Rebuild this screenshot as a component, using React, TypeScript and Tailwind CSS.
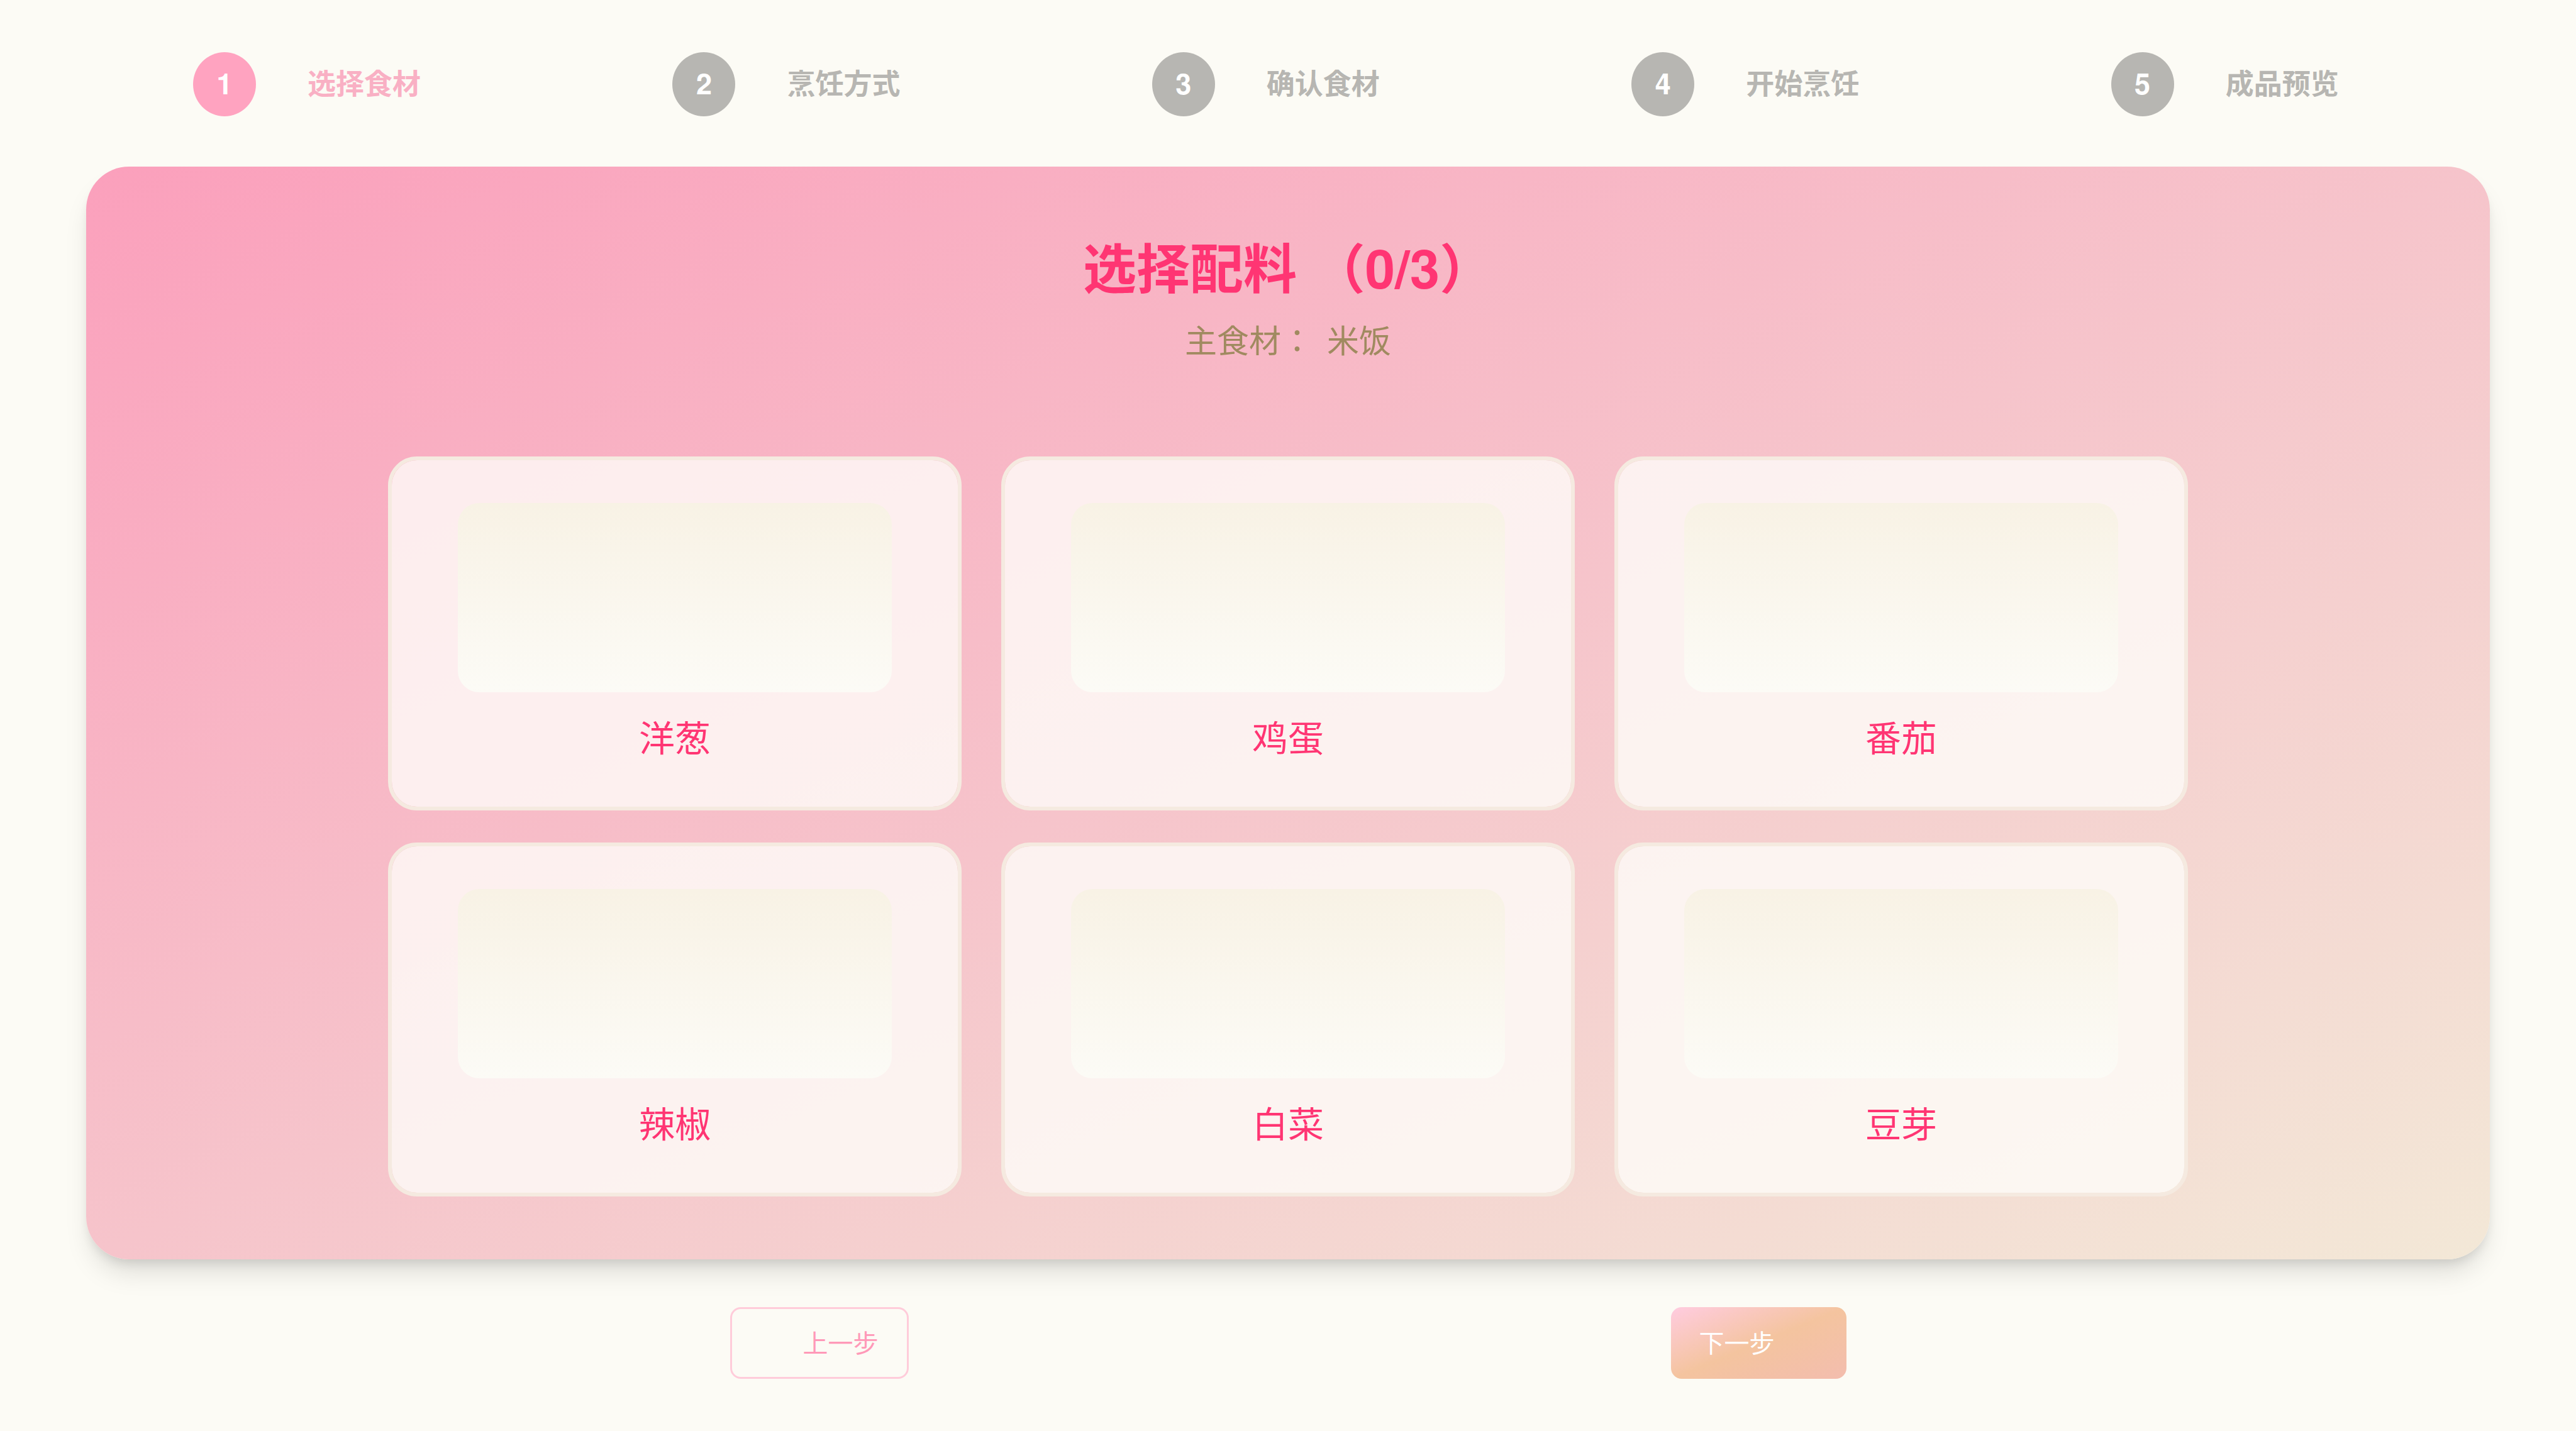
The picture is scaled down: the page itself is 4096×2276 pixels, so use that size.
const steps = ['选择食材', '烹饪方式', '确认食材', '开始烹饪', '成品预览'];
const ingredients = ['洋葱', '鸡蛋', '番茄', '辣椒', '白菜', '豆芽'];

function StepBar({ current }: { current: number }) {
  return (
    <nav aria-label="步骤" className="px-[142px]">
      <ol className="flex">
        {steps.map((label, i) => {
          const active = i === current;
          return (
            <li
              key={label}
              aria-current={active ? 'step' : undefined}
              className="flex flex-1 items-center gap-[82px] pl-[165px] text-[45px] leading-[64px] font-bold"
            >
              <span
                className={`flex h-[102px] w-[100px] shrink-0 items-center justify-center rounded-[50%] pb-1 text-white ${
                  active ? 'bg-[#ffa3c0]' : 'bg-[#b7b6b2]'
                }`}
              >
                {i + 1}
              </span>
              <span className={`pb-1 whitespace-nowrap ${active ? 'text-[#f9b0c4]' : 'text-[#b7b6b2]'}`}>{label}</span>
            </li>
          );
        })}
      </ol>
    </nav>
  );
}

function IngredientCard({ name }: { name: string }) {
  return (
    <button
      type="button"
      className="flex flex-col items-center gap-[30px] rounded-[46px] border-6 border-[#f5eae0] bg-[#fefcf9]/80 bg-clip-padding px-[105px] pt-[68px] pb-[72px]"
    >
      <span className="block h-[301px] w-full rounded-[34px] bg-linear-to-b/srgb from-[#f8f2e5] to-[#fcfbf6]" />
      <span className="text-[57px] leading-[80px] text-[#ff3573]">{name}</span>
    </button>
  );
}

export default function App() {
  return (
    <div className="min-h-screen bg-[#fcfbf5] pt-[83px] font-['Nimbus_Sans','TeX_Gyre_Heros','FreeSans','Liberation_Sans','Noto_Sans_CJK_JP',sans-serif]">
      <StepBar current={0} />

      <main className="mx-[137px] mt-20 flex flex-col items-center rounded-[68px] bg-linear-to-br/srgb from-[#fba0bc] via-[#f6c4cb] to-[#f3e8d7] px-16 pt-[107px] pb-[100px] shadow-[0_28px_43px_-9px_rgba(0,0,0,0.13),0_11px_17px_-6px_rgba(0,0,0,0.11)]">
        <h1 className="text-[85px] leading-[104px] font-bold text-[#ff3573]">选择配料 （0/3）</h1>
        <p className="mt-[25px] text-[51px] leading-[76px] text-[#a08a60]">
          主食材： <span className="ml-2">米饭</span>
        </p>
        <section className="mt-[149px] grid w-full max-w-[2862px] grid-cols-3 gap-x-[63px] gap-y-[51px]">
          {ingredients.map((name) => (
            <IngredientCard key={name} name={name} />
          ))}
        </section>
      </main>

      <footer className="mx-auto mt-[76px] flex w-[1775px] max-w-full justify-between text-[40px] leading-[56px]">
        <button
          type="button"
          className="h-[114px] w-[284px] rounded-[17px] border-3 border-[#ffccda] pr-[45px] pb-1 text-right text-[#ff99b8]"
        >
          上一步
        </button>
        <button
          type="button"
          className="h-[114px] w-[279px] rounded-[17px] bg-linear-to-br/srgb from-[#ffcce0] via-[#f4c49f] to-[#f3bdae] pb-1 pl-[45px] text-left text-white"
        >
          下一步
        </button>
      </footer>
    </div>
  );
}
